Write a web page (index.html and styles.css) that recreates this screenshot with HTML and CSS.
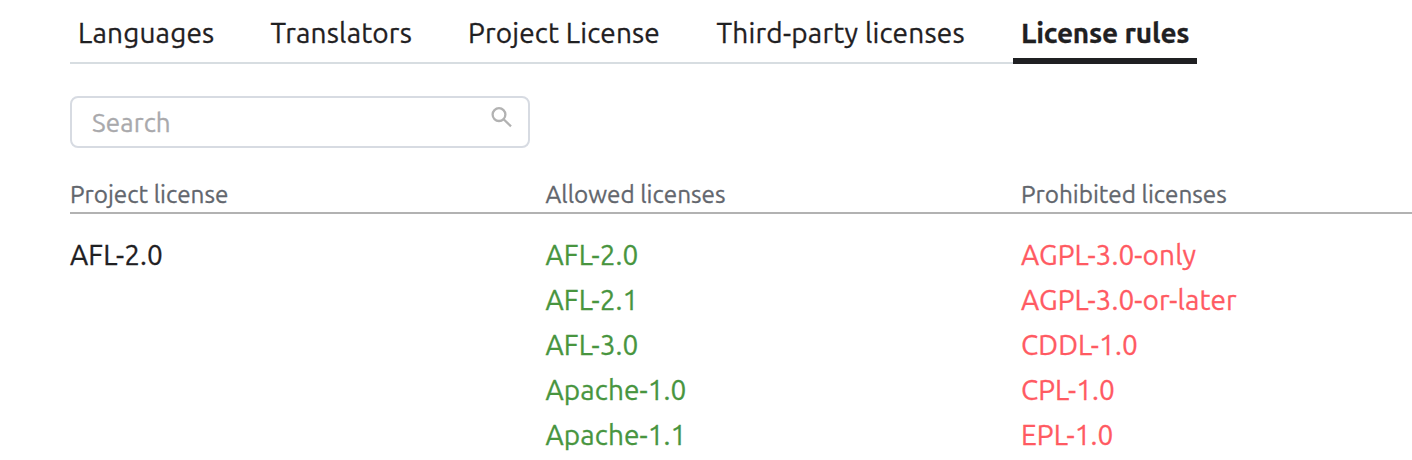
FILE: index.html
```html
<!DOCTYPE html>
<html lang="en">
<head>
<meta charset="utf-8">
<title>License rules</title>
<link rel="stylesheet" href="styles.css">
</head>
<body>
<nav class="tabs">
  <a class="tab tab-languages">Languages</a>
  <a class="tab tab-translators">Translators</a>
  <a class="tab tab-project">Project License</a>
  <a class="tab tab-third">Third-party licenses</a>
  <a class="tab tab-rules active">License rules</a>
</nav>
<div class="search">
  <span class="placeholder">Search</span>
  <svg class="search-icon" viewBox="0 0 24 24"><circle cx="9" cy="8.6" r="6.4"/><path d="M13.6 13.2 21 20.4"/></svg>
</div>
<section class="rules">
  <header class="row head"><span>Project license</span><span>Allowed licenses</span><span>Prohibited licenses</span></header>
  <div class="row body">
    <ul class="list"><li>AFL-2.0</li></ul>
    <ul class="list allowed"><li>AFL-2.0</li><li>AFL-2.1</li><li>AFL-3.0</li><li>Apache-1.0</li><li>Apache-1.1</li></ul>
    <ul class="list prohibited"><li>AGPL-3.0-only</li><li>AGPL-3.0-or-later</li><li>CDDL-1.0</li><li>CPL-1.0</li><li>EPL-1.0</li></ul>
  </div>
</section>
</body>
</html>
```
FILE: styles.css
```css
* { box-sizing: border-box; }
body {
  margin: 0;
  height: 460px;
  padding-left: 70px;
  overflow: hidden;
  background: #fff;
  color: #1f2022;
  font: 28px/45px "Ubuntu", "Noto Sans", sans-serif;
  -webkit-text-stroke: 0.3px currentColor;
}
.tabs { display: flex; width: 1127px; height: 64px; border-bottom: 2px solid #d7dde1; white-space: nowrap; }
.tab { height: 64px; padding: 10px 8px 0; letter-spacing: 0.17px; }
.tab-languages { width: 192.5px; }
.tab-translators { width: 197.5px; }
.tab-project { width: 248.5px; }
.tab-third { width: 304.5px; letter-spacing: 0.22px; }
.tab-rules { width: 184px; }
.active { font-weight: 700; letter-spacing: -0.17px; border-bottom: 6px solid #1f2022; }
.search {
  display: flex; justify-content: space-between;
  width: 460px; height: 52px; margin-top: 32px; padding: 0 14px 0 20px;
  border: 2px solid #d7dbe2; border-radius: 8px;
  color: #a9a9ac; font-size: 26px; line-height: 50px; letter-spacing: 0.12px;
}
.search-icon { width: 24px; height: 24px; margin-top: 8.4px; fill: none; stroke: #b2b2b2; stroke-width: 2.3; }
.rules { margin-top: 24px; }
.row { display: grid; grid-template-columns: 475.5px 475.5px 1fr; }
.head { height: 42px; border-bottom: 2px solid #b2b2b2; color: #62666d; font-size: 24.3px; line-height: 44px; }
.body { padding-top: 18px; }
.list { margin: 0; padding: 0; list-style: none; letter-spacing: 0.1px; }
.allowed { color: #48953f; }
.prohibited { color: #ff5a62; }
```
